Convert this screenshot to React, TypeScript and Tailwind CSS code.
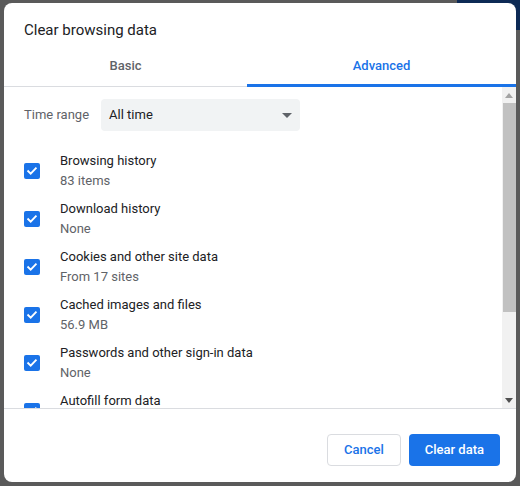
import React from "react";

/* ── Checkbox (always checked) ───────────────────────────── */
function Check() {
  return (
    <div className="w-4 h-4 shrink-0 rounded-[2px] bg-[#1a73e8] flex items-center justify-center">
      <svg width="12" height="12" viewBox="0 0 12 12" fill="none">
        <path d="M2.2 6.2l2.5 2.5L9.8 3.4" stroke="white" strokeWidth="1.9" strokeLinecap="square" />
      </svg>
    </div>
  );
}

const rows = [
  { label: "Browsing history", sub: "83 items" },
  { label: "Download history", sub: "None" },
  { label: "Cookies and other site data", sub: "From 17 sites" },
  { label: "Cached images and files", sub: "56.9 MB" },
  { label: "Passwords and other sign-in data", sub: "None" },
  { label: "Autofill form data", sub: "" },
];

/* ── Fake classic scrollbar ──────────────────────────────── */
function Scrollbar() {
  return (
    <div className="w-[14px] shrink-0 bg-[#f1f1f1] flex flex-col items-center">
      <div className="h-[16px] flex items-center justify-center">
        <svg width="8" height="5" viewBox="0 0 8 5">
          <path d="M0 5L4 0L8 5Z" fill="#a3a3a3" />
        </svg>
      </div>
      <div className="w-[13px] h-[209px] bg-[#c1c1c1]" />
      <div className="flex-1" />
      <div className="h-[16px] flex items-center justify-center">
        <svg width="8" height="5" viewBox="0 0 8 5">
          <path d="M0 0L4 5L8 0Z" fill="#505050" />
        </svg>
      </div>
    </div>
  );
}

export default function App() {
  return (
    <div
      className="relative w-[520px] h-[486px] bg-[#5a5a5a] overflow-hidden pl-[4px] pt-[3px]"
      style={{ fontFamily: "Roboto, 'Liberation Sans', sans-serif" }}
    >
      {/* page behind the overlay */}
      <div className="absolute right-0 top-0 w-[63px] h-[30px] bg-[#0d2a55]" />

      <div className="relative w-[512px] h-[479px] bg-white rounded-lg flex flex-col overflow-hidden">
        {/* Title */}
        <div className="px-5 pt-[17px] text-[15px] leading-5 text-[#202124]">
          Clear browsing data
        </div>

        {/* Tabs */}
        <div className="mt-[5px] h-[42px] flex border-b border-[#dadce0]">
          <div className="w-[243px] flex items-center justify-center text-[13px] font-medium text-[#5f6368]">
            Basic
          </div>
          <div className="relative flex-1 flex items-center justify-center text-[13px] font-medium text-[#1a73e8]">
            Advanced
            <div className="absolute left-0 right-0 bottom-[-1px] h-[3px] bg-[#1a73e8]" />
          </div>
        </div>

        {/* Scrolling body */}
        <div className="flex-1 flex overflow-hidden">
          <div className="flex-1 overflow-hidden pl-5 pt-3">
            <div className="flex items-center gap-3">
              <span className="text-[13px] text-[#5f6368]">Time range</span>
              <div className="w-[199px] h-8 bg-[#f1f3f4] rounded flex items-center justify-between pl-2 pr-[8px]">
                <span className="text-[13px] text-[#202124]">All time</span>
                <svg width="10" height="5" viewBox="0 0 10 5">
                  <path d="M0 0L5 5L10 0Z" fill="#5f6368" />
                </svg>
              </div>
            </div>

            <div className="mt-[20px] flex flex-col gap-2">
              {rows.map((r) => (
                <div key={r.label} className="h-10 flex items-center gap-5">
                  <Check />
                  <div className="text-[13px] leading-5">
                    <div className="text-[#202124]">{r.label}</div>
                    <div className="text-[#5f6368]">{r.sub || "\u00a0"}</div>
                  </div>
                </div>
              ))}
            </div>
          </div>
          <Scrollbar />
        </div>

        {/* Footer */}
        <div className="h-[74px] shrink-0 border-t border-[#dadce0] flex justify-end items-start gap-2 pt-[25px] pr-4">
          <button className="h-8 px-4 rounded border border-[#dadce0] bg-white text-[13px] font-medium text-[#1a73e8]">
            Cancel
          </button>
          <button className="h-8 px-4 rounded bg-[#1a73e8] text-[13px] font-medium text-white">
            Clear data
          </button>
        </div>
      </div>
    </div>
  );
}
